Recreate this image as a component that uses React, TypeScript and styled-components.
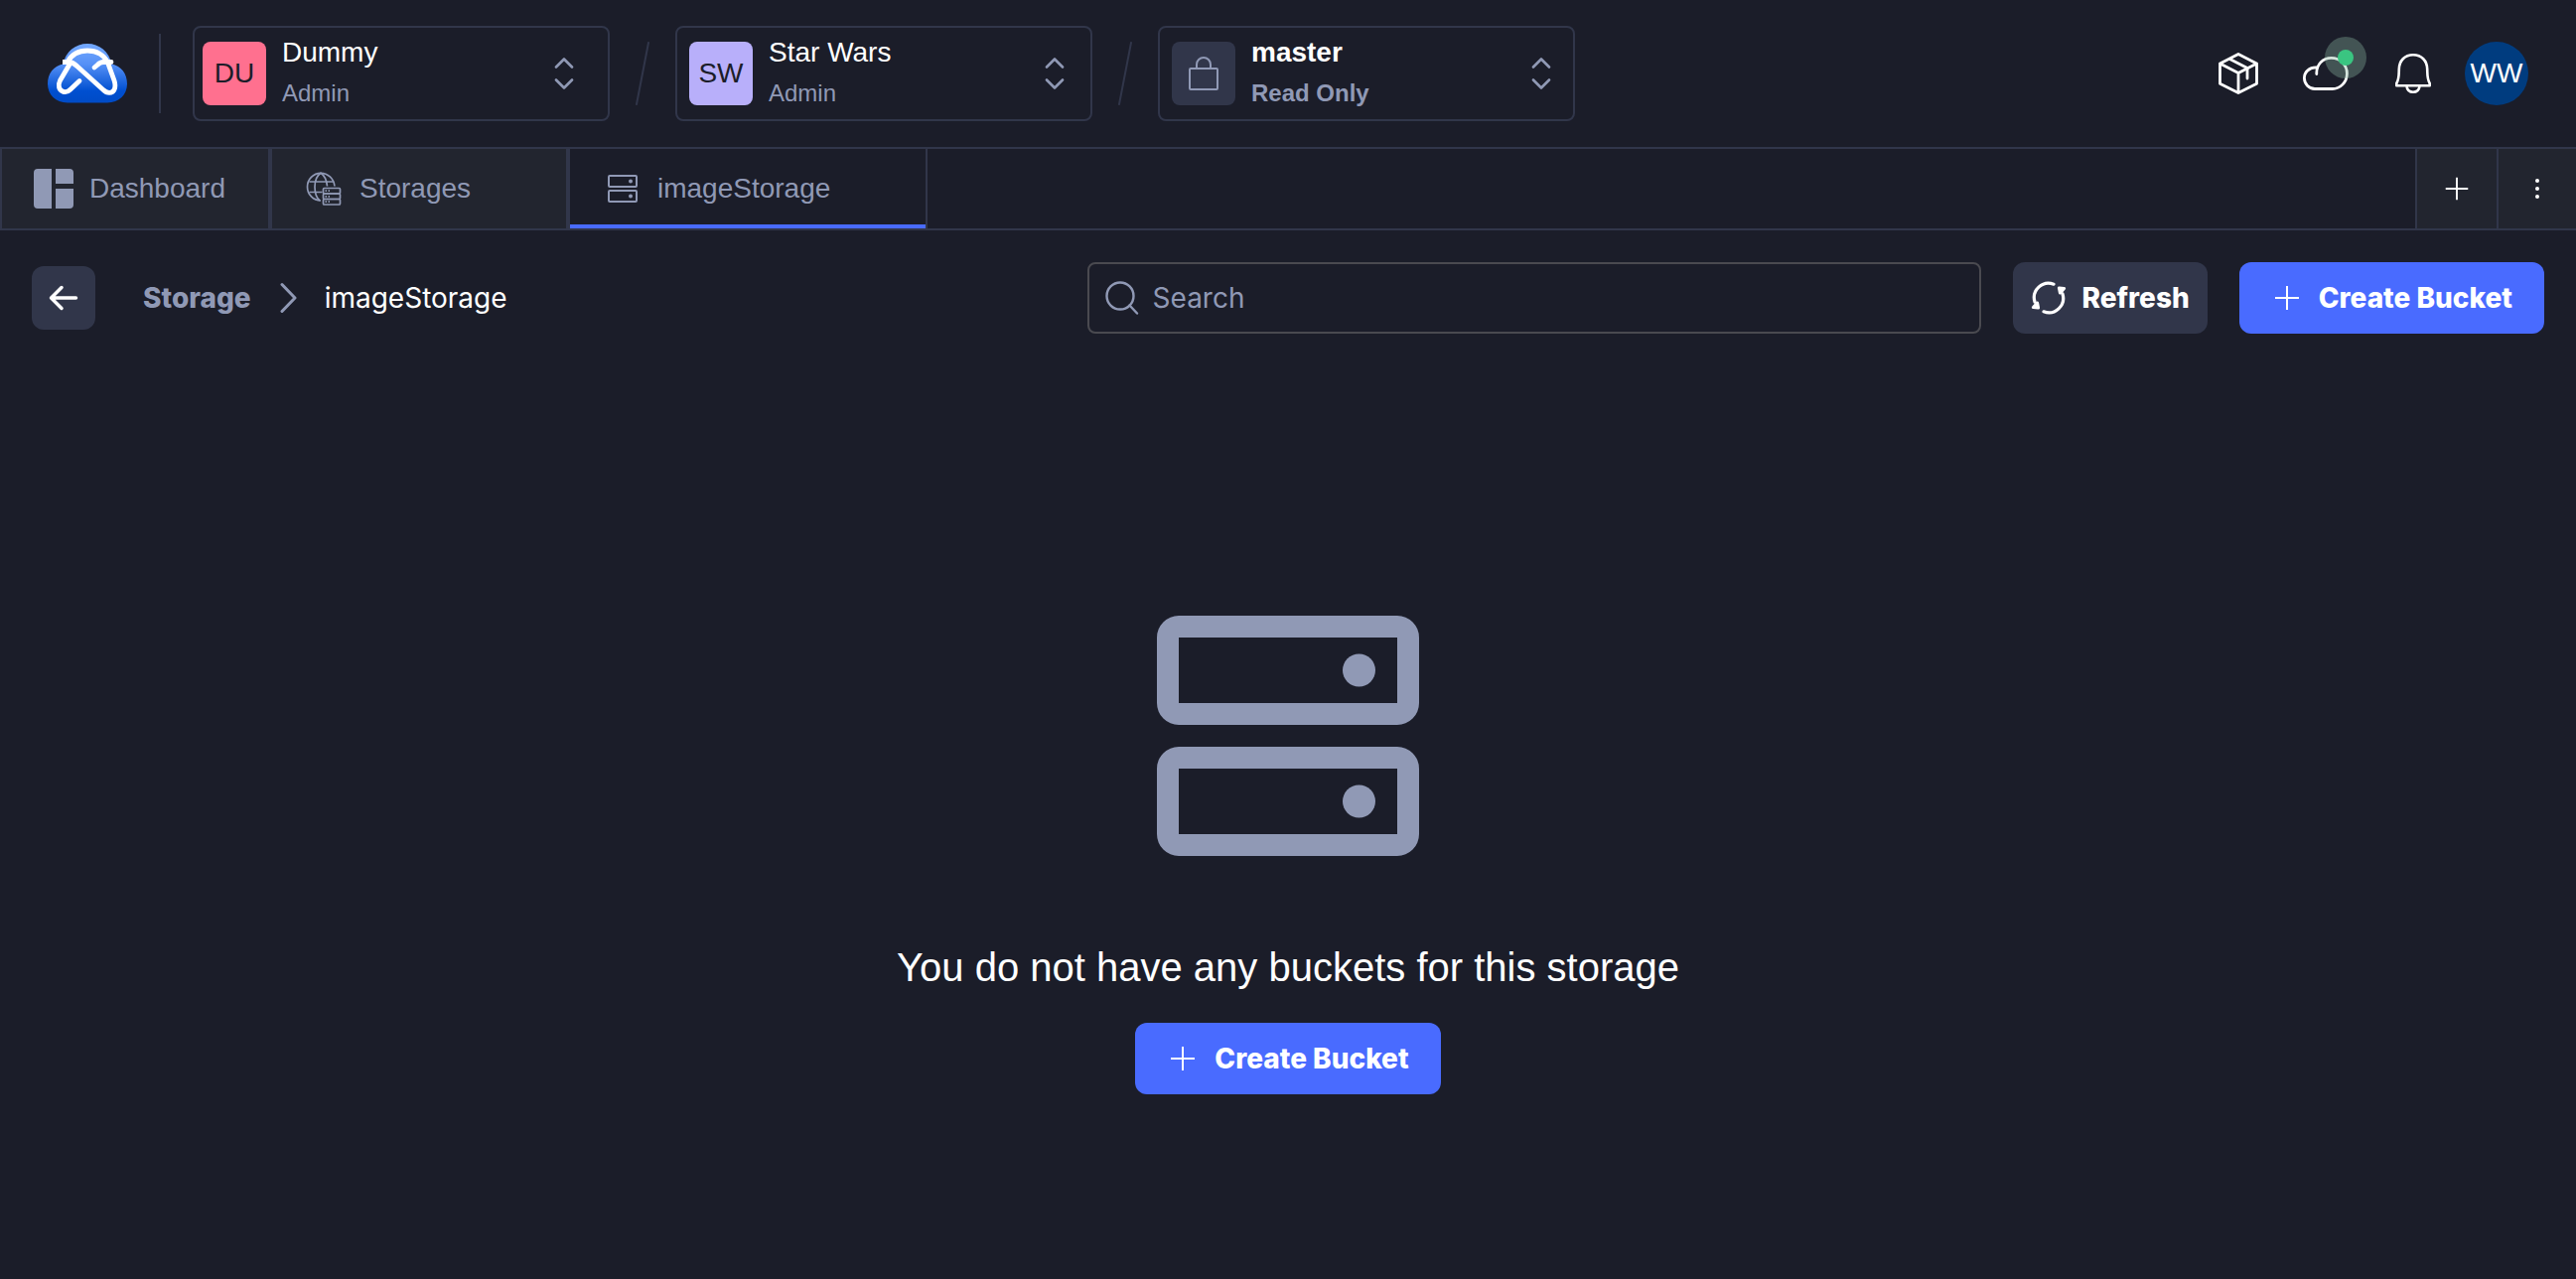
import React from "react";
import styled, { createGlobalStyle } from "styled-components";

const color = {
  page: "#1b1d29",
  raised: "#22252f",
  line: "#31364a",
  muted: "#9099b5",
  accent: "#496bff",
  field: "#4a4a50",
  white: "#ffffff",
};

const bodyFont = '"Liberation Sans", Arial, Helvetica, sans-serif';
const uiFont = 'Inter, "Liberation Sans", sans-serif';

const GlobalStyle = createGlobalStyle`
  *, *::before, *::after { box-sizing: border-box; }
  body {
    margin: 0;
    background: ${color.page};
    color: ${color.white};
    font-family: ${bodyFont};
    font-size: 28px;
  }
  button, input, select { font: inherit; color: inherit; margin: 0; }
  button { cursor: pointer; border: 0; background: none; padding: 0; }
  svg { display: block; flex: none; }
`;

const Page = styled.div`
  display: flex;
  flex-direction: column;
  min-height: 100vh;
`;

const Header = styled.header`
  display: flex;
  align-items: center;
  justify-content: space-between;
  height: 148px;
  padding: 0 48px;
`;

const HeaderStart = styled.div`
  display: flex;
  align-items: center;
  gap: 32px;
`;

const HomeLink = styled.a`
  display: block;
`;

const Divider = styled.span`
  width: 2px;
  height: 80px;
  background: ${color.line};
`;

const Switchers = styled.nav`
  display: flex;
  align-items: center;
  gap: 26px;
`;

const Switcher = styled.label<{ $left: number; $right: number }>`
  display: flex;
  align-items: center;
  gap: 16px;
  width: 420px;
  height: 96px;
  padding: 0 ${(p) => p.$right}px 0 ${(p) => p.$left}px;
  border: 2px solid ${color.line};
  border-radius: 8px;
  cursor: pointer;
`;

const Tile = styled.span<{ $fill: string }>`
  display: flex;
  align-items: center;
  justify-content: center;
  flex: none;
  width: 64px;
  height: 64px;
  border-radius: 8px;
  background: ${(p) => p.$fill};
  color: ${color.page};
  font-family: ${bodyFont};
`;

const SwitcherText = styled.span<{ $bold?: boolean }>`
  display: flex;
  flex: 1;
  min-width: 0;
  flex-direction: column;
  gap: 1px;
  padding-bottom: 1px;
  font-weight: ${(p) => (p.$bold ? 700 : 400)};
`;

const NameSelect = styled.select`
  appearance: none;
  width: 100%;
  height: 40px;
  padding: 0;
  border: 0;
  background: transparent;
  line-height: 40px;
  cursor: pointer;
`;

const Role = styled.span`
  color: ${color.muted};
  font-size: 24px;
  line-height: 40px;
`;

const HeaderEnd = styled.div`
  display: flex;
  align-items: center;
  gap: 24px;
`;

const HeaderIcons = styled.div`
  display: flex;
  align-items: center;
  gap: 32px;
`;

const IconButton = styled.button`
  position: relative;
  display: flex;
  align-items: center;
  justify-content: center;
  width: 56px;
  height: 64px;
`;

const StatusDot = styled.span`
  position: absolute;
  top: -5px;
  right: -13px;
  display: flex;
  align-items: center;
  justify-content: center;
  width: 42px;
  height: 42px;
  border-radius: 50%;
  background: rgba(138, 182, 162, 0.36);

  &::after {
    content: "";
    width: 16px;
    height: 16px;
    border-radius: 50%;
    background: #3ac581;
  }
`;

const UserButton = styled.button`
  width: 64px;
  height: 64px;
  border-radius: 50%;
  background: #003c7f;
`;

const TabBar = styled.div`
  display: flex;
  justify-content: space-between;
  height: 84px;
  border: 0 solid ${color.line};
  border-width: 2px 0;
`;

const TabGroup = styled.div`
  display: flex;
`;

const Tab = styled.button<{ $active?: boolean; $pad: number; $gap: number; $width: number }>`
  display: flex;
  align-items: center;
  gap: ${(p) => p.$gap}px;
  width: ${(p) => p.$width}px;
  padding-left: ${(p) => p.$pad}px;
  border: 0 solid ${color.line};
  border-width: 0 2px;
  background: ${(p) => (p.$active ? "transparent" : color.raised)};
  box-shadow: ${(p) => (p.$active ? `inset 0 -4px ${color.accent}` : "none")};
  color: ${color.muted};
`;

const TabAction = styled.button`
  display: flex;
  align-items: center;
  justify-content: center;
  width: 82px;
  border-left: 2px solid ${color.line};
  background: ${color.raised};

  &:last-child {
    width: 80px;
  }
`;

const Toolbar = styled.div`
  display: flex;
  align-items: center;
  gap: 32px;
  padding: 32px;
  font-family: ${uiFont};
`;

const Crumbs = styled.nav`
  display: flex;
  align-items: center;
  flex: 1;
  gap: 48px;
`;

const BackButton = styled.button`
  display: flex;
  align-items: center;
  justify-content: center;
  width: 64px;
  height: 64px;
  border-radius: 12px;
  background: ${color.line};
`;

const Trail = styled.div`
  display: flex;
  align-items: center;
  gap: 28px;
`;

const CrumbLink = styled.a`
  color: ${color.muted};
  font-weight: 800;
  text-decoration: none;
`;

const SearchField = styled.label`
  display: flex;
  align-items: center;
  gap: 14px;
  flex: 0 1 900px;
  height: 72px;
  padding: 0 16px;
  border: 2px solid ${color.field};
  border-radius: 8px;
`;

const SearchInput = styled.input`
  flex: 1;
  min-width: 0;
  height: 40px;
  padding: 0;
  border: 0;
  outline: 0;
  background: transparent;

  &::placeholder {
    color: ${color.muted};
    opacity: 1;
  }
`;

const ActionButton = styled.button<{ $primary?: boolean }>`
  display: flex;
  align-items: center;
  gap: 16px;
  height: 72px;
  padding: 0 ${(p) => (p.$primary ? 32 : 18)}px;
  border-radius: 12px;
  background: ${(p) => (p.$primary ? color.accent : color.line)};
  font-family: ${uiFont};
  font-weight: 800;
  white-space: nowrap;
`;

const Empty = styled.main`
  display: flex;
  flex: 1;
  flex-direction: column;
  align-items: center;
  justify-content: center;
  gap: 32px;
  padding-top: 66px;
`;

const EmptyArt = styled.div`
  padding-bottom: 56px;
`;

const EmptyTitle = styled.h1`
  margin: 0;
  font-size: 40px;
  font-weight: 400;
  line-height: 48px;
`;

const Logo = () => (
  <svg width="80" height="60" viewBox="0 0 80 60" role="img" aria-label="Home">
    <defs>
      <linearGradient id="cloudTop" x1="0" y1="0" x2="0" y2="1">
        <stop offset="0" stopColor="#74a9ff" />
        <stop offset="0.35" stopColor="#5590f6" />
        <stop offset="0.8" stopColor="#004fd0" />
        <stop offset="1" stopColor="#004bc6" />
      </linearGradient>
    </defs>
    <path
      d="M20 59.5C8 59.5 0 51 0 40.500C0 30 6 22.500 15.500 20.500C18 8 28 0 40 0C52 0 62 8 64.500 20.500C74 22.500 80 30 80 40.500C80 51 72 59.500 60 59.500Z"
      fill="url(#cloudTop)"
    />
    <g fill="none" stroke="#fff" strokeWidth="4.800" strokeLinejoin="round">
      <path d="M15 18.500H21C25 18.500 27.500 20.500 30 23L56 46.500C60 50.500 65 50 67 46.500C68.500 43.500 68 40 67 37L60.500 19C57 11 49 7 40 7C31 7 24 11 20 18.500" />
      <path d="M22.500 20L12.500 37C10 42 11.500 46.500 15 48C18 49.500 21 48 23 46L32 37.500M47 24L50 21.500C52 19.500 53 18.500 56 18.500H64" strokeLinecap="round" />
    </g>
  </svg>
);

const SortArrows = () => (
  <svg width="20" height="32" viewBox="0 0 20 32" fill="none" stroke={color.muted} strokeWidth="2.600" strokeLinecap="round" strokeLinejoin="round">
    <path d="M2 9.500L10 1.500L18 9.500M2 22.500L10 30.500L18 22.500" />
  </svg>
);

const Slash = () => (
  <svg width="14" height="64" viewBox="0 0 14 64" stroke={color.line} strokeWidth="2" strokeLinecap="round">
    <path d="M13 1L1 63" />
  </svg>
);

const LockIcon = () => (
  <svg width="32" height="36" viewBox="0 0 32 36" fill="none" stroke={color.muted} strokeWidth="2" strokeLinejoin="round">
    <rect x="2" y="13" width="28" height="21" rx="1" />
    <path d="M9 13V9A7 7 0 0 1 23 9V13" />
  </svg>
);

const CubeIcon = () => (
  <svg width="40" height="42" viewBox="0 0 40 42" fill="none" stroke="#fff" strokeWidth="2.800" strokeLinejoin="round" strokeLinecap="round">
    <path d="M20 1.500L38.500 11V31.300L20 40.500L1.500 31.300V11ZM1.500 11L20 20.500L38.500 11M20 20.500V40.500" />
    <path d="M11.500 6.500L29 15.500V26" />
  </svg>
);

const CloudIcon = () => (
  <svg width="46" height="34" viewBox="0 0 46 34" fill="none" stroke="#fff" strokeWidth="2.800" strokeLinecap="round">
    <path d="M13.800 17.500C13.400 8 20 1.400 28.600 1.400C37.500 1.400 44.400 8.200 44.400 17C44.400 26 37.500 32.500 29.500 32.500H12C6 32.500 1.400 27.600 1.400 21.600C1.400 15.400 6.500 10.600 14 11" />
  </svg>
);

const BellIcon = () => (
  <svg width="36" height="40" viewBox="0 0 36 40" fill="none" stroke="#fff" strokeWidth="2.600" strokeLinejoin="round">
    <path d="M1.300 32.300H34.700V30C32 25.500 32.400 21 32.200 15.500C32 7 26.500 1.300 18 1.300C9.500 1.300 4 7 3.800 15.500C3.600 21 4 25.500 1.300 30Z" />
    <path d="M11.500 33C12 36.500 14.500 38.700 18 38.700C21.500 38.700 24 36.500 24.500 33" />
  </svg>
);

const DashboardIcon = () => (
  <svg width="40" height="40" viewBox="0 0 40 40" fill="currentColor">
    <path d="M4 0H18V40H4A4 4 0 0 1 0 36V4A4 4 0 0 1 4 0ZM22 0H36A4 4 0 0 1 40 4V15H22ZM22 20H40V36A4 4 0 0 1 36 40H22Z" />
  </svg>
);

const GlobeServerIcon = () => (
  <svg width="36" height="34" viewBox="0 0 36 34" fill="none" stroke="currentColor" strokeWidth="1.700">
    <path d="M15 29C7.500 29 1.500 22.800 1.500 15.200C1.500 7.500 7.500 1.300 15 1.300C22 1.300 28 6.500 29 14.500" />
    <path d="M14 29C10.500 26 9 21 9 15.200C9 9.500 11 4 15 1.300C19 4 21 9 21.500 14.500M3.500 10H27.500M3.500 20.500H16.500" />
    <rect x="17.500" y="16.500" width="17" height="5.500" rx="1" />
    <rect x="17.500" y="22" width="17" height="5.500" rx="1" />
    <rect x="17.500" y="27.500" width="17" height="5.500" rx="1" />
    <path d="M19.500 19.200H24M19.500 24.800H24M19.500 30.200H24" strokeDasharray="1.500 1.500" />
  </svg>
);

const ServerIcon = () => (
  <svg width="30" height="28" viewBox="0 0 30 28" fill="none" stroke="currentColor" strokeWidth="2">
    <rect x="1" y="1" width="28" height="11" rx="1" />
    <rect x="1" y="16" width="28" height="11" rx="1" />
    <circle cx="23" cy="6.500" r="1" />
    <circle cx="23" cy="21.500" r="1" />
  </svg>
);

const ServerArt = () => (
  <svg width="264" height="242" viewBox="0 0 24 22" fill={color.muted}>
    <path fillRule="evenodd" d="M2 0H22A2 2 0 0 1 24 2V8A2 2 0 0 1 22 10H2A2 2 0 0 1 0 8V2A2 2 0 0 1 2 0ZM2 2V8H22V2Z" />
    <path fillRule="evenodd" d="M2 12H22A2 2 0 0 1 24 14V20A2 2 0 0 1 22 22H2A2 2 0 0 1 0 20V14A2 2 0 0 1 2 12ZM2 14V20H22V14Z" />
    <circle cx="18.500" cy="5" r="1.500" />
    <circle cx="18.500" cy="17" r="1.500" />
  </svg>
);

const PlusIcon = ({ size }: { size: number }) => (
  <svg width={size} height={size} viewBox="0 0 32 32" stroke="#fff" strokeWidth="2">
    <path d="M4 16H28M16 4V28" />
  </svg>
);

const DotsIcon = () => (
  <svg width="6" height="22" viewBox="0 0 6 22" fill="#fff">
    <circle cx="3" cy="3" r="2" />
    <circle cx="3" cy="11" r="2" />
    <circle cx="3" cy="19" r="2" />
  </svg>
);

const BackIcon = () => (
  <svg width="32" height="32" viewBox="0 0 32 32" fill="none" stroke="#fff" strokeWidth="3.500" strokeLinecap="round" strokeLinejoin="round">
    <path d="M14 5.500L3.500 16L14 26.500M3.500 16H28.500" />
  </svg>
);

const CrumbArrow = () => (
  <svg width="18" height="32" viewBox="0 0 18 32" fill="none" stroke={color.muted} strokeWidth="3" strokeLinecap="round" strokeLinejoin="round">
    <path d="M3 2.500L16 16L3 29.500" />
  </svg>
);

const SearchIcon = () => (
  <svg width="34" height="34" viewBox="0 0 34 34" fill="none" stroke={color.muted} strokeWidth="2.400" strokeLinecap="round">
    <circle cx="15" cy="15" r="13.500" />
    <path d="M24.500 24.500L32 32.500" />
  </svg>
);

const RefreshIcon = () => (
  <svg width="36" height="36" viewBox="0 0 36 36" fill="none" stroke="#fff" strokeWidth="3.200" strokeLinecap="round" strokeLinejoin="round">
    <path d="M23 4.200A14.500 14.500 0 0 0 4 22M13 31.800A14.500 14.500 0 0 0 32 14" />
    <path d="M2.500 27.500L7.500 28L6.500 23ZM33.500 8.500L28.500 8L29.500 13Z" fill="#fff" />
  </svg>
);

const CreateBucket = () => (
  <ActionButton type="button" $primary>
    <PlusIcon size={32} />
    Create Bucket
  </ActionButton>
);

type SwitcherProps = {
  label: string;
  name: string;
  role: string;
  fill: string;
  left: number;
  right: number;
  bold?: boolean;
  children: React.ReactNode;
};

const ContextSwitcher = ({ label, name, role, fill, left, right, bold, children }: SwitcherProps) => (
  <Switcher $left={left} $right={right}>
    <Tile $fill={fill}>{children}</Tile>
    <SwitcherText $bold={bold}>
      <NameSelect aria-label={label} defaultValue={name}>
        <option>{name}</option>
      </NameSelect>
      <Role>{role}</Role>
    </SwitcherText>
    <SortArrows />
  </Switcher>
);

export default function App() {
  return (
    <Page>
      <GlobalStyle />
      <Header>
        <HeaderStart>
          <HomeLink href="#home">
            <Logo />
          </HomeLink>
          <Divider />
          <Switchers aria-label="Context">
            <ContextSwitcher label="Organization" name="Dummy" role="Admin" fill="#ff708f" left={8} right={34}>
              DU
            </ContextSwitcher>
            <Slash />
            <ContextSwitcher label="Project" name="Star Wars" role="Admin" fill="#b8affa" left={12} right={26}>
              SW
            </ContextSwitcher>
            <Slash />
            <ContextSwitcher label="Version" name="master" role="Read Only" fill={color.line} left={12} right={22} bold>
              <LockIcon />
            </ContextSwitcher>
          </Switchers>
        </HeaderStart>
        <HeaderEnd>
          <HeaderIcons>
            <IconButton type="button" aria-label="Packages">
              <CubeIcon />
            </IconButton>
            <IconButton type="button" aria-label="Environment status">
              <CloudIcon />
              <StatusDot />
            </IconButton>
            <IconButton type="button" aria-label="Notifications">
              <BellIcon />
            </IconButton>
          </HeaderIcons>
          <UserButton type="button">WW</UserButton>
        </HeaderEnd>
      </Header>

      <TabBar>
        <TabGroup role="tablist">
          <Tab type="button" role="tab" $width={272} $pad={32} $gap={16}>
            <DashboardIcon />
            Dashboard
          </Tab>
          <Tab type="button" role="tab" $width={300} $pad={34} $gap={18}>
            <GlobeServerIcon />
            Storages
          </Tab>
          <Tab type="button" role="tab" aria-selected $active $width={362} $pad={38} $gap={20}>
            <ServerIcon />
            imageStorage
          </Tab>
        </TabGroup>
        <TabGroup>
          <TabAction type="button" aria-label="New tab">
            <PlusIcon size={30} />
          </TabAction>
          <TabAction type="button" aria-label="Tab options">
            <DotsIcon />
          </TabAction>
        </TabGroup>
      </TabBar>

      <Toolbar>
        <Crumbs aria-label="Breadcrumb">
          <BackButton type="button" aria-label="Back">
            <BackIcon />
          </BackButton>
          <Trail>
            <CrumbLink href="#storage">Storage</CrumbLink>
            <CrumbArrow />
            <span>imageStorage</span>
          </Trail>
        </Crumbs>
        <SearchField>
          <SearchIcon />
          <SearchInput type="text" placeholder="Search" aria-label="Search" />
        </SearchField>
        <ActionButton type="button">
          <RefreshIcon />
          Refresh
        </ActionButton>
        <CreateBucket />
      </Toolbar>

      <Empty>
        <EmptyArt>
          <ServerArt />
        </EmptyArt>
        <EmptyTitle>You do not have any buckets for this storage</EmptyTitle>
        <CreateBucket />
      </Empty>
    </Page>
  );
}
